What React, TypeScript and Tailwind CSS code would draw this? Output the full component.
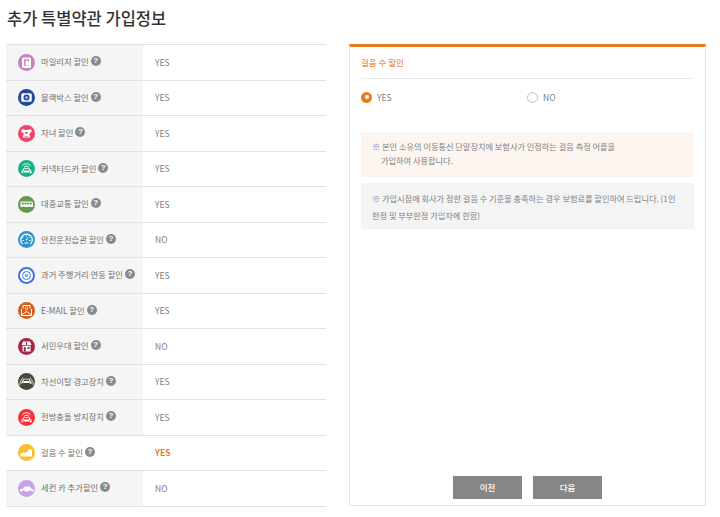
import type { ReactNode } from 'react';

const font = "font-['Noto_Sans_CJK_KR','Noto_Sans',sans-serif]";

function Disc({ color, children }: { color: string; children: ReactNode }) {
  return (
    <svg viewBox="0 0 34 34" className="h-[17px] w-[17px] shrink-0" aria-hidden>
      <circle cx="17" cy="17" r="17" fill={color} />
      {children}
    </svg>
  );
}

// front view of a car, the windscreen takes the colour of the disc
const Car = ({ y, color }: { y: number; color: string }) => (
  <g transform={`translate(0 ${y})`}>
    <path d="M7 10.500V5.500l2-1 2-4h12l2 4 2 1v5h-3.500V9h-15v1.500z" fill="#fff" />
    <path d="M12.500 2h9l1.500 3H11z" fill={color} />
    <path d="M9 6h3v1.500H9zM22 6h3v1.500h-3z" fill={color} />
  </g>
);

const Waves = ({ color }: { color: string }) => (
  <path d="M9 11c4.500-4.500 11.500-4.500 16 0M12 14.500c3-2.500 7-2.500 10 0" fill="none" stroke={color} strokeWidth="2" />
);

const rows: { label: string; value: string; icon: ReactNode; active?: boolean }[] = [
  {
    label: '마일리지 할인',
    value: 'YES',
    icon: (
      <Disc color="#c97fc4">
        <rect x="8" y="7" width="18" height="21" rx="3" fill="#fff" />
        <path d="M12 10.500h10v13H12z" fill="#c97fc4" />
        <path d="M15 13h4l3 3v7h-7z" fill="#fff" />
      </Disc>
    ),
  },
  {
    label: '블랙박스 할인',
    value: 'YES',
    icon: (
      <Disc color="#1f4a9c">
        <rect x="6.500" y="8.500" width="21" height="17" rx="3" fill="#fff" />
        <circle cx="17" cy="17" r="6" fill="#1f4a9c" />
        <circle cx="17" cy="17" r="3" fill="#8fb0e4" />
      </Disc>
    ),
  },
  {
    label: '자녀 할인',
    value: 'YES',
    icon: (
      <Disc color="#f0426c">
        <path d="M6 11c3-3 6-3 8-1h6c2-2 5-2 8 1l-3 5h-2.500l2 9H9.500l2-9H9z" fill="#fff" />
        <path d="M13.500 14h7l-3.500 5zM12.500 22h9v1h-9z" fill="#f0426c" />
      </Disc>
    ),
  },
  {
    label: '커넥티드카 할인',
    value: 'YES',
    icon: (
      <Disc color="#12b388">
        <Waves color="#fff" />
        <Car y={16} color="#12b388" />
      </Disc>
    ),
  },
  {
    label: '대중교통 할인',
    value: 'YES',
    icon: (
      <Disc color="#659a4e">
        <path d="M5 11h22c2 0 3 2 3 4v7H5z" fill="#fff" />
        <path d="M7.500 13h4v4h-4zM13 13h4v4h-4zM18.500 13h4v4h-4zM24 13h3.500v4H24z" fill="#659a4e" />
        <circle cx="11" cy="23" r="2" fill="#659a4e" />
        <circle cx="24" cy="23" r="2" fill="#659a4e" />
      </Disc>
    ),
  },
  {
    label: '안전운전습관 할인',
    value: 'NO',
    icon: (
      <Disc color="#2f94cc">
        <path d="M9 26a11.500 11.500 0 1 1 16 0" fill="none" stroke="#fff" strokeWidth="2.500" />
        <path d="M9 13h2M23 13h2M17 9v2M9 19h3M22 19h3" stroke="#fff" strokeWidth="2" />
        <path d="M21 11l-3 8-3-1z" fill="#fff" />
        <path d="M13 23h8v2h-8z" fill="#fff" />
      </Disc>
    ),
  },
  {
    label: '과거 주행거리 연동 할인',
    value: 'YES',
    icon: (
      <Disc color="#3f72dc">
        <circle cx="17" cy="17" r="13" fill="#fff" />
        <circle cx="17" cy="17" r="8" fill="none" stroke="#3f72dc" strokeWidth="2" />
        <circle cx="17" cy="17" r="3.500" fill="#8fa9e8" />
      </Disc>
    ),
  },
  {
    label: 'E-MAIL 할인',
    value: 'YES',
    icon: (
      <Disc color="#d2601f">
        <path d="M10 13V7h14v6" fill="none" stroke="#fff" strokeWidth="2" />
        <path d="M7 14v13h20V14" fill="none" stroke="#fff" strokeWidth="2" />
        <path d="M7 26l10-7 10 7" fill="none" stroke="#fff" strokeWidth="2" />
        <circle cx="17" cy="13" r="2.500" fill="none" stroke="#fff" strokeWidth="1.500" />
      </Disc>
    ),
  },
  {
    label: '서민우대 할인',
    value: 'NO',
    icon: (
      <Disc color="#a52746">
        <path d="M10 7h14l3 7H7z" fill="#fff" />
        <path d="M9 15.500h16V27H9z" fill="#fff" />
        <path d="M16 8h2v6h-2zM11.500 18h4v9h-4zM19 18h4v4h-4z" fill="#a52746" />
      </Disc>
    ),
  },
  {
    label: '차선이탈 경고장치',
    value: 'YES',
    icon: (
      <Disc color="#4a4636">
        <path d="M3.500 24c0-7 3-12 7-15M30.500 24c0-7-3-12-7-15" fill="none" stroke="#fff" strokeWidth="1.500" />
        <Car y={11} color="#4a4636" />
      </Disc>
    ),
  },
  {
    label: '전방충돌 방지장치',
    value: 'YES',
    icon: (
      <Disc color="#f5323a">
        <Waves color="#fff" />
        <Car y={16} color="#f5323a" />
      </Disc>
    ),
  },
  {
    label: '걸음 수 할인',
    value: 'YES',
    active: true,
    icon: (
      <Disc color="#fbbf2d">
        <path d="M5 25v-6l4-1 1-2 3 1 2 1 4-3 2-4h7v14z" fill="#fff" />
      </Disc>
    ),
  },
  {
    label: '세컨 카 추가할인',
    value: 'NO',
    icon: (
      <Disc color="#c8a0e6">
        <path d="M4 23v-4l6-2 4-4h9l5 5 3 1v4z" fill="#fff" />
        <circle cx="11" cy="23" r="2.500" fill="#c8a0e6" />
        <circle cx="24" cy="23" r="2.500" fill="#c8a0e6" />
      </Disc>
    ),
  },
];

function Help() {
  return (
    <span className="flex h-[10px] w-[10px] shrink-0 items-center justify-center rounded-full bg-[#8a8a8a] font-['Liberation_Sans',sans-serif] text-[8px] leading-none font-bold text-white">
      ?
    </span>
  );
}

function Row({ label, value, icon, active }: (typeof rows)[number]) {
  return (
    <div className="flex h-[35.5px] border-b border-[#e2e2e2]">
      <div className={`flex w-[137px] items-center pl-[11.5px] ${active ? 'bg-white' : 'bg-[#f5f5f5]'}`}>
        {icon}
        <span className="mt-[-2px] ml-[6.500px] flex items-center gap-[2px] text-[8.300px] whitespace-nowrap text-[#707070]">
          {label}
          <Help />
        </span>
      </div>
      <div className={`flex items-center pl-[12px] text-[8.500px] ${active ? 'font-bold text-[#e67e22]' : 'text-[#808080]'}`}>
        {value}
      </div>
    </div>
  );
}

function Radio({ checked, label }: { checked?: boolean; label: string }) {
  return (
    <div className="flex items-center gap-[5px]">
      <span
        className={
          checked
            ? 'flex h-[11px] w-[11px] items-center justify-center rounded-full bg-[#e67e1e]'
            : 'h-[11px] w-[11px] rounded-full border border-[#c4c4c4] bg-white'
        }
      >
        {checked ? <span className="h-[4px] w-[4px] rounded-full bg-white" /> : null}
      </span>
      <span className="text-[8.500px] text-[#808080]">{label}</span>
    </div>
  );
}

export default function App() {
  return (
    <div className={`h-[517px] w-[720px] overflow-hidden bg-white ${font}`}>
      <h1 className="pt-[6px] pl-[7px] text-[16.500px] leading-[24px] font-medium text-[#333]">추가 특별약관 가입정보</h1>
      <div className="mt-[14px] flex items-start pl-[6px]">
        <div className="w-[320px] border-t border-[#e2e2e2]">
          {rows.map((row) => (
            <Row key={row.label} {...row} />
          ))}
        </div>
        <section className="ml-[23px] flex h-[462px] w-[357px] flex-col border border-t-[3px] border-[#e2e2e2] border-t-[#e67e1e] px-[11px]">
          <h2 className="flex h-[32px] items-center border-b border-[#eaeaea] pb-[1px] text-[8.500px] font-medium text-[#e9944f]">
            걸음 수 할인
          </h2>
          <div className="mt-[12px] grid grid-cols-2 pr-[1px]">
            <Radio checked label="YES" />
            <Radio label="NO" />
          </div>
          <div className="mt-[28px] h-[45px] bg-[#fdf6f0] px-[11px] pt-[7px] text-[8.200px] leading-[14.500px] text-[#808080]">
            ※ 본인 소유의 이동통신 단말장치에 보험사가 인정하는 걸음 측정 어플을
            <br />
            <span className="pl-[9px]">가입하여 사용합니다.</span>
          </div>
          <div className="mt-[6px] h-[46px] bg-[#f4f4f4] px-[11px] pt-[7px] text-[8.200px] leading-[17px] text-[#808080]">
            ※ 가입시점에 회사가 정한 걸음 수 기준을 충족하는 경우 보험료를 할인하여 드립니다. (1인 한정 및 부부한정 가입자에 한함)
          </div>
          <div className="mt-auto mb-[6px] flex gap-[11px] pl-[92px]">
            <button type="button" className="h-[23px] w-[69px] bg-[#868686] text-[8.500px] font-medium text-white">
              이전
            </button>
            <button type="button" className="h-[23px] w-[69px] bg-[#868686] text-[8.500px] font-medium text-white">
              다음
            </button>
          </div>
        </section>
      </div>
    </div>
  );
}
